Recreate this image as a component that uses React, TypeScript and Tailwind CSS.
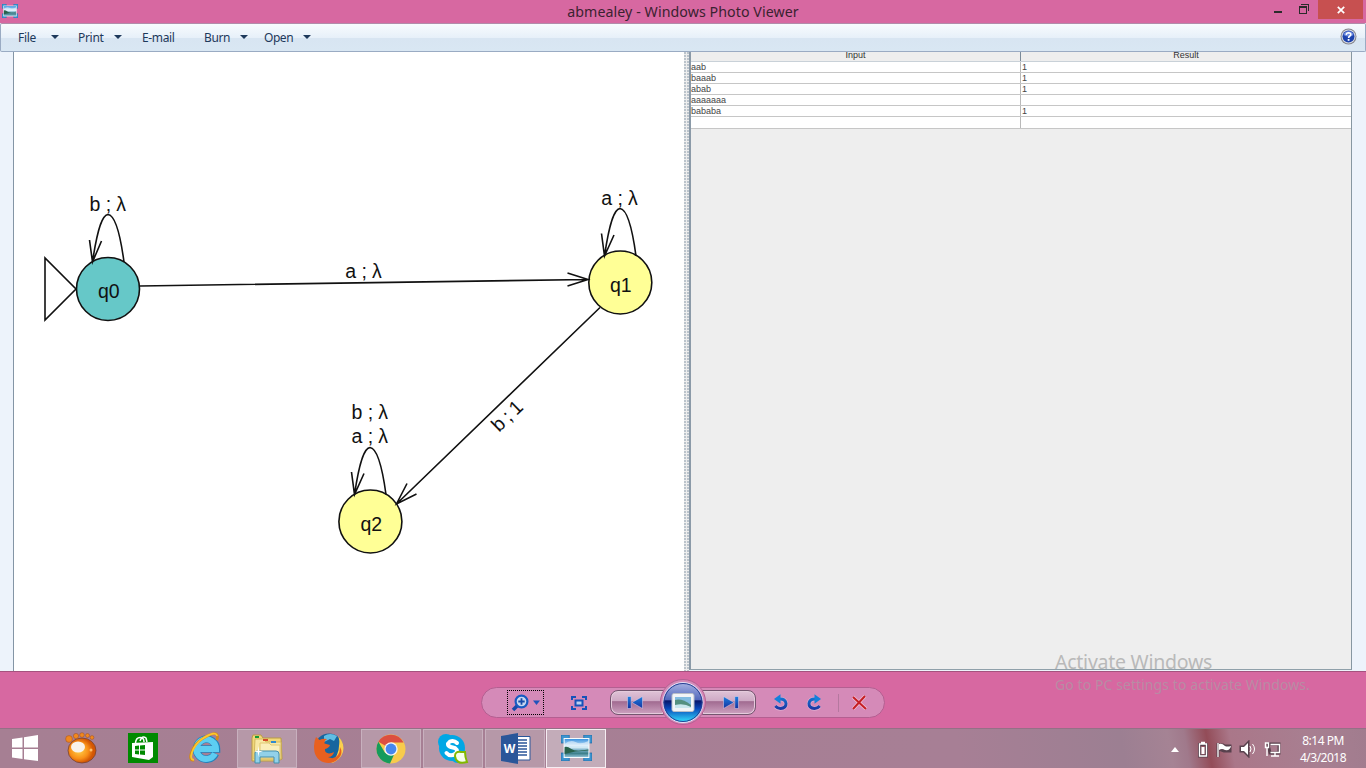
import React from "react";

function Caret() {
  return (
    <svg width="8" height="4" viewBox="0 0 8 4" className="block">
      <path d="M0 0H8L4 4Z" fill="#1e395b" />
    </svg>
  );
}

function PhotoIcon({ className }: { className: string }) {
  return (
    <svg className={className} viewBox="0 0 30 26" preserveAspectRatio="none">
      <defs>
        <linearGradient id="sky" x1="0" y1="0" x2="0" y2="1">
          <stop offset="0" stopColor="#3c93e0" />
          <stop offset="0.45" stopColor="#dff1fa" />
          <stop offset="0.6" stopColor="#7fb4cc" />
          <stop offset="0.8" stopColor="#3c7f8a" />
          <stop offset="1" stopColor="#8fc0d4" />
        </linearGradient>
      </defs>
      <path d="M0 0H8V5H5V8H0ZM30 0H22V5H25V8H30ZM0 26H8V21H5V18H0ZM30 26H22V21H25V18H30Z" fill="#3c94cf" stroke="#2169a3" strokeWidth="0.7" />
      <rect x="2.500" y="3" width="25" height="20" fill="#f7fbfd" />
      <rect x="3.500" y="4" width="23" height="18" fill="url(#sky)" />
      <path d="M3.500 9Q9 4 14 7T26.500 6V11H3.500Z" fill="#fff" opacity="0.5" />
      <path d="M3.500 12Q6 11 10 14T26.500 14.500V15.500L14 16.500L3.500 19Z" fill="#28624c" />
    </svg>
  );
}

const menus = [
  { label: "File", cls: "w-[18px] tracking-[-0.3px]", gap: "ml-[15px] mr-[19px]", drop: true },
  { label: "Print", cls: "w-[26px] tracking-[-0.3px]", gap: "ml-[10px] mr-[20px]", drop: true },
  { label: "E-mail", cls: "w-[62px] tracking-[-0.35px]", gap: "", drop: false },
  { label: "Burn", cls: "w-[25px] tracking-[-0.4px]", gap: "ml-[11px] mr-[16px]", drop: true },
  { label: "Open", cls: "w-[29px] tracking-[-0.45px]", gap: "ml-[10px]", drop: true },
];

function TitleBar() {
  return (
    <header className="relative flex h-[23px] items-start justify-between bg-[#d768a1]">
      <PhotoIcon className="ml-[2px] mt-[4px] h-[14px] w-[16px]" />
      <h1 className="absolute inset-x-0 top-[2px] text-center text-[14.2px] leading-[20px] tracking-[0.08px] text-[#3a2230]">abmealey - Windows Photo Viewer</h1>
      <div className="flex h-[19px]">
        <svg width="44" height="19" viewBox="0 0 44 19" shapeRendering="crispEdges">
          <path d="M0 11H8V13H0Z" fill="#2b2b2b" />
          <path d="M27 4H35V11H34V5H27ZM25 6H33V14H25ZM26 8V13H32V8Z" fill="#2b2b2b" fillRule="evenodd" />
        </svg>
        <div className="flex h-[19px] w-[45px] items-center justify-center bg-[#c75050]">
          <svg width="8" height="8" viewBox="0 0 8 8"><path d="M.8 .8L7.2 7.2M7.2 .8L.8 7.2" stroke="#fff" strokeWidth="1.700" /></svg>
        </div>
        <div className="w-[3px]" />
      </div>
    </header>
  );
}

function MenuBar() {
  return (
    <nav className="flex h-[29px] items-center rounded-[2px] border border-[#9aabc3] border-t-[#b18caa] bg-[linear-gradient(#f8fbfe_0,#e7f0f9_50%,#d8e5f2_52%,#d9e7f3_100%)] pl-[17px] text-[12px] text-[#1e395b]">
      {menus.map((m) => (
        <div key={m.label} className="flex items-center">
          <span className={m.cls + " whitespace-nowrap"}>{m.label}</span>
          {m.drop && <span className={m.gap + " -mt-[2px]"}><Caret /></span>}
        </div>
      ))}
      <svg className="-mt-[3px] ml-auto mr-[8px]" width="17" height="17" viewBox="0 0 17 17">
        <circle cx="8.500" cy="8.500" r="8" fill="#85858c" />
        <circle cx="8.500" cy="8.500" r="7" fill="#d9dce5" />
        <circle cx="8.500" cy="8.500" r="6" fill="#1d42ac" />
        <path d="M3.500 7A5.200 5.200 0 0 1 13.500 7Q9 10 3.500 7Z" fill="#6d8be0" />
        <path d="M6.200 6.900Q6.300 4.700 8.600 4.700Q10.800 4.800 10.800 6.600Q10.800 7.600 9.600 8.300Q8.600 8.900 8.600 10" fill="none" stroke="#fff" strokeWidth="1.600" />
        <rect x="7.700" y="11" width="1.800" height="1.800" fill="#fff" />
      </svg>
    </nav>
  );
}

function Label({ x, y, first }: { x: number; y: number; first: string }) {
  return (
    <text x={`${x} ${x + 10.5} ${x + 16.3} ${x + 21.5} ${x + 26.8}`} y={y}>{first + " ; λ"}</text>
  );
}

function Automaton() {
  return (
    <svg width="670" height="619" viewBox="14 52 670 619" className="block bg-white font-['Liberation_Sans',Arial,sans-serif]" fill="none" stroke="#111" strokeWidth="1.600">
      <path d="M45 258V320L76 289Z" />
      <circle cx="108" cy="289" r="31.500" fill="#66c8c8" />
      <circle cx="620.300" cy="282.500" r="31.500" fill="#ffff96" />
      <circle cx="370.400" cy="521.500" r="31.500" fill="#ffff96" />
      <path d="M92.500 262C98 225 103 215 108 214.500C113 215 119 225 124 262M89.500 240L92.500 262L101.500 241" />
      <path d="M604.500 256C610 219 615 209 620 208.500C625 209 631 219 636 256M601.500 233.500L604.500 256L614 235" />
      <path d="M354.500 494.500C360 458 365 448 370 447.500C375 448 381 458 386 494.500M351.500 472L354.500 494.500L364 473.500" />
      <path d="M140 286L588 279.500M567.500 273L588 279.500L567.500 286" />
      <path d="M600 307.500L396.500 504M407 483.500L396.500 504L416.500 494" />
      <g fill="#111" stroke="none" fontSize="19.500">
        <text x="98" y="297.500">q0</text>
        <text x="610" y="291.500">q1</text>
        <text x="360.500" y="530.500">q2</text>
        <Label x={89.500} y={210.500} first="b" />
        <Label x={601.300} y={204.500} first="a" />
        <Label x={345.300} y={278} first="a" />
        <Label x={351.500} y={419} first="b" />
        <Label x={351.500} y={443} first="a" />
        <text transform="translate(512 421) rotate(-44)" x="-17.500 -8 -2.500 2.500 6.800" y="-0.500">b ; 1</text>
      </g>
    </svg>
  );
}

const rows = [
  ["aab", "1"],
  ["baaab", "1"],
  ["abab", "1"],
  ["aaaaaaa", ""],
  ["bababa", "1"],
  ["", ""],
];

function ResultTable() {
  return (
    <section className="flex h-[618px] w-[663px] flex-col border-b border-l-2 border-r border-b-[#8fa0aa] border-l-[#8b9aa8] border-r-[#8797a2] bg-[#eeeeee] font-['Liberation_Sans',Arial,sans-serif] text-[9px] text-[#444]">
      <div className="flex h-[10px] shrink-0 border-b border-[#c9d1d8] text-center leading-[6px] text-[#333]">
        <div className="h-[9px] w-[330px] border-r border-[#7a8a99]">Input</div>
        <div className="h-[9px] flex-1">Result</div>
      </div>
      {rows.map((r, i) => (
        <div key={i} className="flex h-[11.1px] shrink-0 border-b border-[#c6c6c6] bg-white leading-[10px]">
          <div className="w-[330px] border-r border-[#b9b9b9]">{r[0]}</div>
          <div className="pl-[1px]">{r[1]}</div>
        </div>
      ))}
    </section>
  );
}

function Divider() {
  return <div className="h-full w-[5px] bg-[#eeeeee] bg-[radial-gradient(circle_at_1px_1px,#bac3cb_0.7px,transparent_0.9px)] bg-[size:3px_3px]" />;
}

function RotateIcon({ flip }: { flip?: boolean }) {
  return (
    <svg width="14" height="17" viewBox="0 0 14 17" className={flip ? "overflow-visible -scale-x-100" : "overflow-visible"}>
      <defs>
        <linearGradient id="turn" x1="0" y1="0" x2="0" y2="17" gradientUnits="userSpaceOnUse">
          <stop stopColor="#1487e0" /><stop offset="1" stopColor="#1b2d9c" />
        </linearGradient>
      </defs>
      <path d="M5.500 5C13.500 4 14.500 14.500 6.500 14.500Q3.500 14.500 1.300 12" stroke="#e6c3de" strokeWidth="4.400" fill="none" opacity="0.6" />
      <path d="M5.500 5C13.500 4 14.500 14.500 6.500 14.500Q3.500 14.500 1.300 12" stroke="url(#turn)" strokeWidth="3" fill="none" />
      <path d="M0 5L6.500 0.300V9.700Z" fill="#1480db" />
    </svg>
  );
}

function SkipIcon({ flip }: { flip?: boolean }) {
  return (
    <svg width="16" height="13" viewBox="0 0 16 13" className={flip ? "block shrink-0 -scale-x-100" : "block shrink-0"}>
      <defs>
        <linearGradient id="skip" x1="0" y1="0" x2="0" y2="1">
          <stop stopColor="#1b7fe0" /><stop offset="1" stopColor="#15329f" />
        </linearGradient>
      </defs>
      <path d="M0.500 0.500H4.200V12.500H0.500ZM15.500 0.500V12.500L5 6.500Z" fill="url(#skip)" stroke="#e8d5e8" strokeWidth="0.500" />
    </svg>
  );
}

function Controls() {
  return (
    <div className="relative flex h-[57px] justify-center border-t border-[#a5527e] bg-[#d768a1]">
      <div className="mt-[15px] flex h-[31px] w-[404px] items-center rounded-full border border-[#b45f91] bg-[#d58ab8]">
        <div className="ml-[25px] flex h-[25px] w-[37px] items-center border border-dotted border-black pl-[3px]">
          <svg width="18" height="18" viewBox="0 0 18 18" fill="none" className="shrink-0">
            <path d="M7 11L2 16" stroke="#1848a9" strokeWidth="3.500" />
            <circle cx="10.500" cy="7.500" r="5.900" fill="#c7d7ef" stroke="#175bc2" strokeWidth="2.200" />
            <path d="M7.300 7.500H13.700M10.500 4.300V10.700" stroke="#174ba9" strokeWidth="1.800" />
          </svg>
          <svg className="ml-[4px] shrink-0" width="7" height="5" viewBox="0 0 7 5"><path d="M0 .5H7L3.500 5Z" fill="#1f53bb" /></svg>
        </div>
        <svg className="ml-[27px]" width="16" height="14" viewBox="0 0 16 14" fill="none" stroke="#1752ba" strokeWidth="2">
          <path d="M1 4V1H5M11 1H15V4M15 10V13H11M5 13H1V10" />
          <rect x="4.500" y="4.500" width="7" height="5" fill="#bbcff0" />
        </svg>
        <div className="ml-[23px] flex h-[25px] w-[54px] items-center rounded-l-[8px] border border-[#74556f] bg-[linear-gradient(#dfc3d7_0,#cea9c4_44%,#a16b91_46%,#cda2c0_100%)] pl-[16px] shadow-[inset_0_0_0_1px_#e5cbdc]"><SkipIcon /></div>
        <div className="w-[38px]" />
        <div className="flex h-[25px] w-[54px] items-center rounded-r-[8px] border border-[#74556f] bg-[linear-gradient(#dfc3d7_0,#cea9c4_44%,#a16b91_46%,#cda2c0_100%)] pl-[20px] shadow-[inset_0_0_0_1px_#e5cbdc]"><SkipIcon flip /></div>
        <div className="ml-[18px] h-[17px]"><RotateIcon /></div>
        <div className="ml-[19px] h-[17px]"><RotateIcon flip /></div>
        <div className="ml-[17px] h-[18px] w-px bg-[#b5789f]" />
        <svg className="ml-[13px]" width="15" height="15" viewBox="0 0 15 15">
          <path d="M1 2L14 14M13 1L1 14" stroke="#f0bed5" strokeWidth="3.500" />
          <path d="M1 2L14 14M13 1L1 14" stroke="#c51f24" strokeWidth="2" />
        </svg>
      </div>
      <svg className="absolute left-[659px] top-[6px]" width="48" height="49" viewBox="0 0 48 49">
        <defs>
          <linearGradient id="orb" x1="0" y1="0" x2="0" y2="1">
            <stop offset="0" stopColor="#a9b4e4" /><stop offset="0.43" stopColor="#5268bc" />
            <stop offset="0.46" stopColor="#08166b" /><stop offset="0.65" stopColor="#0948ba" />
            <stop offset="1" stopColor="#35e5ff" />
          </linearGradient>
        </defs>
        <circle cx="24" cy="24" r="22.500" fill="#d58ab8" stroke="#b45f91" />
        <circle cx="24" cy="24.500" r="20" fill="url(#orb)" stroke="#e7e2f5" strokeWidth="1" />
        <circle cx="24" cy="24.500" r="19" fill="none" stroke="#273f93" />
        <rect x="13" y="15.500" width="22" height="18" rx="2" fill="#f2f4f7" stroke="#b8bdc7" />
        <rect x="16" y="19" width="16" height="11" fill="#83bce1" />
        <path d="M16 22Q23 20 32 27V30H16Z" fill="#559080" /><path d="M16 27Q25 25 32 29V30H16Z" fill="#c9e6ed" />
      </svg>
    </div>
  );
}

const boxed = "flex h-[39px] items-center justify-center border border-[#c8b0be] bg-[#b698a8]";

function Taskbar() {
  return (
    <footer className="flex h-[40px] items-start border-t border-[#957086] bg-[linear-gradient(80deg,#a67f93_0,#a77f95_70%,#9c7f92_82%,#a58394_85.5%,#a0798b_86.7%,#934c58_88.3%,#aa7789_90%,#a87f91_96%,#a17c8e_100%)]">
      <svg className="ml-[11px] mt-[6px]" width="28" height="27" viewBox="0 0 28 27">
        <path d="M1 4L11.500 2.500V12.500H1ZM13 2.300L27 0V12.500H13ZM1 14H11.500V24L1 22.500ZM13 14H27V26L13 24.200Z" fill="#fff" />
      </svg>
      <svg className="ml-[26px] mt-[3px]" width="33" height="33" viewBox="0 0 33 33">
        <defs><radialGradient id="orange" cx=".4" cy=".5"><stop stopColor="#ffd14b" /><stop offset=".65" stopColor="#f99018" /><stop offset="1" stopColor="#d35604" /></radialGradient></defs>
        <ellipse cx="17" cy="18.500" rx="14" ry="12.500" fill="url(#orange)" stroke="#6b3d32" strokeWidth=".7" />
        <g fill="#f1881e" stroke="#9c4d24" strokeWidth=".5"><circle cx="4" cy="7" r="3.400" /><circle cx="11" cy="4" r="2.600" /><circle cx="17" cy="3" r="2.300" /><circle cx="22.500" cy="3.500" r="2" /><circle cx="27" cy="5.500" r="1.900" /></g>
        <ellipse cx="13" cy="15" rx="7" ry="5.500" fill="#f8f2ea" /><circle cx="26" cy="18" r="1.500" fill="#ffc06b" />
      </svg>
      <svg className="ml-[30px] mt-[4px]" width="30" height="30" viewBox="0 0 30 30">
        <path d="M0 0H30V30H0Z" fill="#008a00" />
        <path d="M4 10L25 9V24L21 27L4 24Z" fill="#fff" />
        <path d="M7.500 10Q8 4.500 12 4.500T16 9M12 8Q14 2 18 5L19 9" fill="none" stroke="#fff" strokeWidth="1.500" />
        <path d="M7 13L11 12.500V16.500H7ZM12 12.400L17 12V16.500H12ZM7 17.500H11V21.500L7 21ZM12 17.500H17V22L12 21.500Z" fill="#008a00" />
      </svg>
      <svg className="ml-[31px] mt-[3px]" width="32" height="32" viewBox="0 0 32 32" fill="none">
        <path d="M26.500 21.500A10 10 0 1 1 27.500 17H10" stroke="#2482bb" strokeWidth="7.500" />
        <path d="M26 21.500A9.800 9.800 0 1 1 27 17H10" stroke="#5dcef2" strokeWidth="6" />
        <path d="M5 28C-2 30 2 14 13 7C22 1 28 0 28.500 4Q29 6 27.500 8" stroke="#d58a16" strokeWidth="2.600" />
        <path d="M5 27.700C-1 29 3 14 13 7C22 1 27.500 0 28 4" stroke="#fbc52f" strokeWidth="1.800" />
      </svg>
      <div className={boxed + " ml-[16px] w-[60px]"}>
        <svg width="34" height="32" viewBox="0 0 34 32">
          <path d="M2 5L3 2H11L13 5H31L32 26L28 28H2Z" fill="#f1d779" stroke="#b99b46" />
          <path d="M5 6H14L16 9H31V26H4Z" fill="#f8e8a5" stroke="#d3b75e" />
          <path d="M10 10H19L21 12H30V25H10Z" fill="#fbeeba" stroke="#e1c874" />
          <path d="M5 3H9V5H5Z" fill="#149b35" /><path d="M13 6H18V8H13Z" fill="#d54a28" /><path d="M21 8H26V10H21Z" fill="#328acf" />
          <path d="M5 20Q5 18 8 18H26Q29 18 29 21V30H24V24H10V30H5Z" fill="#92d1e9" stroke="#448fad" />
          <path d="M8.500 13L9.200 17.800L13 18.500L9.200 19.200L8.500 24L7.800 19.200L4 18.500L7.800 17.800Z" fill="#fff" />
        </svg>
      </div>
      <svg className="ml-[15px] mt-[3px]" width="33" height="33" viewBox="0 0 33 33">
        <circle cx="17" cy="15.500" r="14" fill="#17659f" />
        <path d="M12 4Q18 0 25 4L22 9L18 7L12 10Z" fill="#61bee4" />
        <path d="M26 4Q33 11 31 20Q28 29 19 31Q27 23 27 14Q28 8 26 4Z" fill="#fbd04e" />
        <path d="M4 5L7.500 8Q11 6 15 7Q12 9 12.500 11.500L18 13Q17 16 13 17Q12.500 21 17 21.500Q20 21 22 20Q21 25 16 25Q22 28 26 23Q28 20 28 15Q32 22 25 28C18 34 5 31 2.500 20Q1 11 4 5Z" fill="#e8601f" />
      </svg>
      <div className={boxed + " ml-[16px] w-[60px]"}>
        <svg width="30" height="30" viewBox="0 0 30 30">
          <circle cx="15" cy="15" r="14.500" fill="#f7cb4c" />
          <path d="M15 15L2.400 7.700A14.500 14.500 0 0 1 27.600 8.500H15Z" fill="#dc4f40" />
          <path d="M2.400 7.700L9 18.700Q13 22 18 20.700L14 29.500A14.500 14.500 0 0 1 2.400 7.700Z" fill="#159b5c" />
          <circle cx="15" cy="15" r="6.700" fill="#f5f5f5" /><circle cx="15" cy="15" r="5.400" fill="#4687ee" />
        </svg>
      </div>
      <div className={boxed + " ml-[2px] w-[60px]"}>
        <svg width="32" height="32" viewBox="0 0 32 32">
          <circle cx="9" cy="9" r="8" fill="#00a7e5" /><circle cx="15" cy="15" r="13" fill="#00a7e5" /><circle cx="21" cy="22" r="8" fill="#00a7e5" />
          <path d="M20 10Q17 7 13 8.500Q8.500 12 14 14L18 15Q22 18 18 21Q13 24 9.500 20" fill="none" stroke="#fff" strokeWidth="4" strokeLinecap="round" />
          <path d="M18 23Q18 18 24 19H28Q28 24 30 29Q19 32 18 23Z" fill="#f5ffed" stroke="#81b900" strokeWidth="2" />
        </svg>
      </div>
      <div className={boxed + " ml-[2px] w-[60px]"}>
        <svg width="31" height="31" viewBox="0 0 31 31">
          <path d="M16 3.500H30V27H16Z" fill="#fff" stroke="#2a5699" />
          <path d="M18 7H27M18 10H27M18 13H27M18 16H27M18 19H27M18 22H27" stroke="#2a5699" strokeWidth="1.400" />
          <path d="M1 3L18 0V31L1 28Z" fill="#2a5699" />
          <text x="9.500" y="20" fill="#fff" textAnchor="middle" fontSize="12" fontWeight="bold">W</text>
        </svg>
      </div>
      <div className="ml-[1px] flex h-[39px] w-[60px] items-start justify-center border border-[#f5edf2] bg-[#c3acb9] pt-[5px]"><PhotoIcon className="h-[26px] w-[31px]" /></div>
      <div className="ml-auto flex h-full items-center text-white">
        <svg width="8" height="5" viewBox="0 0 8 5" className="mr-[19px] mt-px"><path d="M0 5L4 0L8 5Z" fill="#fff" /></svg>
        <svg width="85" height="18" viewBox="0 0 85 18" className="mr-[10px]">
          <g stroke="#58414d" strokeWidth="3" fill="none"><path d="M1.500 4.500H8.500V16H1.500ZM20 3V17M21 5H25L27 6H32V11H26L21 9M43 7H46L50 3V15L46 11H43ZM70 4H81V13H72Z" /></g>
          <path d="M1.500 4H8.500V16H1.500ZM3 2.500H7" fill="none" stroke="#fff" strokeWidth="1.300" /><path d="M3.500 7H6.500V14H3.500Z" fill="#fff" />
          <path d="M20 3V17" stroke="#fff" strokeWidth="1.300" /><path d="M21 4Q24 3 27 6Q29 7 33 6Q32 11 27 10Q24 8 21 10Z" fill="#fff" />
          <path d="M43 7H46L50 3V15L46 11H43Z" fill="#fff" /><path d="M52 6Q54 9 52 12M54.500 4Q58.500 9 54.500 14" fill="none" stroke="#fff" />
          <path d="M72.500 4.500H81.500V12.500H72.500M77 13V16M73 16H81M67.500 3H70.500V7.500H67.500ZM69 8V16" fill="none" stroke="#fff" strokeWidth="1.400" />
        </svg>
        <div className="mr-[13px] w-[60px] text-center text-[12px] leading-[17px] tracking-[-0.5px] text-white"><div>8:14 PM</div><div>4/3/2018</div></div>
      </div>
    </footer>
  );
}

export default function App() {
  return (
    <div className="relative flex h-[768px] w-[1366px] flex-col overflow-hidden bg-[#edf3fb] font-['Noto_Sans','Open_Sans',sans-serif]">
      <TitleBar />
      <MenuBar />
      <main className="flex h-[619px] bg-[#edf3fb]">
        <div className="w-[14px] border-r border-[#8495a5]" />
        <Automaton />
        <Divider />
        <ResultTable />
      </main>
      <Controls />
      <Taskbar />
      <div className="pointer-events-none absolute left-[1055px] top-[650px] whitespace-nowrap">
        <p className="text-[19.500px] leading-[24px] tracking-[-0.25px] text-[#b9b9b9]">Activate Windows</p>
        <p className="mt-[2px] text-[14px] leading-[18px] tracking-[0.08px] text-[#b88ca4]">Go to PC settings to activate Windows.</p>
      </div>
    </div>
  );
}
